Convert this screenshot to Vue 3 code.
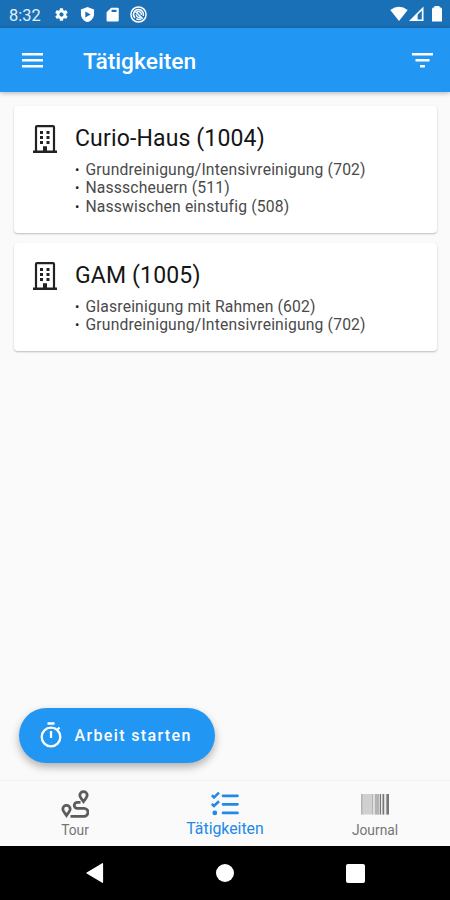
<script setup>
import { ref } from 'vue'

const objects = [
  {
    id: 1004,
    name: 'Curio-Haus',
    tasks: ['Grundreinigung/Intensivreinigung (702)', 'Nassscheuern (511)', 'Nasswischen einstufig (508)']
  },
  {
    id: 1005,
    name: 'GAM',
    tasks: ['Glasreinigung mit Rahmen (602)', 'Grundreinigung/Intensivreinigung (702)']
  }
]

const tab = ref('tasks')
</script>

<template>
  <div class="screen">
    <div class="status">
      <span class="time">8:32</span>
      <svg class="s-icon" viewBox="0 0 24 24">
        <path fill-rule="evenodd" d="M19.4 13a7.500 7.500 0 0 0 0-2l2.100-1.600a.5.5 0 0 0 .1-.7l-2-3.400a.5.500 0 0 0-.6-.2l-2.500 1a7 7 0 0 0-1.700-1l-.4-2.600a.5.5 0 0 0-.5-.5h-4a.5.5 0 0 0-.5.5L9 5.100a7 7 0 0 0-1.700 1l-2.500-1a.5.500 0 0 0-.6.200l-2 3.400a.5.5 0 0 0 .1.700L4.500 11a7.500 7.500 0 0 0 0 2l-2.200 1.600a.5.5 0 0 0-.1.700l2 3.400c.1.200.4.300.6.200l2.500-1a7 7 0 0 0 1.700 1l.4 2.600c0 .3.200.5.500.5h4c.3 0 .5-.2.500-.5l.4-2.600a7 7 0 0 0 1.700-1l2.500 1c.2.100.5 0 .6-.2l2-3.400a.5.5 0 0 0-.1-.7zM12 15.400a3.400 3.400 0 1 1 0-6.800 3.400 3.400 0 0 1 0 6.800z" />
      </svg>
      <svg class="s-icon" viewBox="0 0 24 24">
        <path fill-rule="evenodd" d="M12 0 1.500 4V11c0 6 4.500 11.500 10.500 13 6-1.500 10.500-7 10.500-13V4zM8.500 7.200 17 12l-8.500 4.800z" />
      </svg>
      <svg class="s-icon" viewBox="0 0 24 24">
        <path fill-rule="evenodd" d="M20 1H10L2.500 8.500v12.500a2 2 0 0 0 2 2H20a2 2 0 0 0 2-2V3a2 2 0 0 0-2-2zM10.500 4.500h8V8h-8z" />
      </svg>
      <svg class="s-icon wide" viewBox="0 0 24 24">
        <g fill="none" stroke="#fff" stroke-width="2.100">
          <circle cx="12" cy="12" r="10.700" />
          <path d="M7 17A7 7 0 0 1 12 5a7 7 0 0 1 6.700 9M8 8l10 10M9 12a3.500 3.500 0 0 0 6 3M10 8.500a4 4 0 0 1 6 4M9 18a7 7 0 0 0 7 0" />
        </g>
      </svg>
      <div class="signals">
        <svg width="18" height="16" viewBox="0 0 18 16"><path d="M.3 4Q9-2.500 17.700 4L9 15z" /></svg>
        <svg width="15" height="16" viewBox="0 0 15 16">
          <path fill-rule="evenodd" d="M14.500.5v14.500H0zM12.800 4.500 8.600 8.700v4.700h4.200z" />
        </svg>
        <svg class="battery" width="10" height="16" viewBox="0 0 10 16">
          <path d="M2.500 0h5v1.200Q10 1.500 10 3v12q0 .6-.6.6H.6Q0 15.600 0 15V3q0-1.500 2.500-1.800z" />
        </svg>
      </div>
    </div>

    <header class="appbar">
      <svg width="21" height="15" viewBox="0 0 21 15"><path d="M0 0h21v2.500H0zm0 6h21v2.500H0zm0 6h21v2.500H0z" /></svg>
      <h1>Tätigkeiten</h1>
      <svg class="filter" width="21" height="15" viewBox="0 0 21 15"><path d="M0 0h21v2.500H0zm3.500 6h14v2.500h-14zM8.100 12h4.800v2.500H8.100z" /></svg>
    </header>

    <main>
      <article v-for="o in objects" :key="o.id" class="card">
        <svg class="building" width="24" height="28" viewBox="0 0 24 28">
          <path d="M3 26V2.200Q3 1.200 4 1.200h16q1 0 1 1V26" fill="none" stroke="#222" stroke-width="2.200" />
          <path fill="#222" d="M0 25.600h10v-4.400h4v4.400h10V28H0zM7 6h3v3H7zm6.500 0h3v3h-3zM7 11h3v3H7zm6.500 0h3v3h-3zM7 16h3v3H7zm6.500 0h3v3h-3z" />
        </svg>
        <div>
          <h2>{{ o.name }} ({{ o.id }})</h2>
          <ul>
            <li v-for="t in o.tasks" :key="t">{{ t }}</li>
          </ul>
        </div>
      </article>
    </main>

    <button class="fab">
      <svg width="22" height="26" viewBox="0 0 22 26">
        <g fill="none" stroke="#fff" stroke-width="2.300">
          <circle cx="11" cy="15" r="9.300" />
          <path d="M7.500 1.500h7M11 9v7M17.500 7.500l2-2" />
        </g>
      </svg>
      <span>Arbeit starten</span>
    </button>

    <nav class="tabs">
      <div class="tab" :class="{ active: tab === 'tour' }" @click="tab = 'tour'">
        <svg width="28" height="28" viewBox="0 0 28 28">
          <g fill="none" stroke="#5c5c5c" stroke-width="2.800">
            <path d="M22.500 11.500C20.500 8.500 18.800 7.500 18.800 5.300a3.700 3.700 0 0 1 7.400 0c0 2.200-1.700 3.200-3.700 6.200zM5.500 25.500C3.500 22.500 1.800 21.300 1.800 19a3.700 3.700 0 0 1 7.400 0c0 2.300-1.700 3.500-3.700 6.500z" />
            <path d="M19.500 12.300h-3.200a3 3 0 0 0 0 6.100h6.700a3.900 3.900 0 0 1 0 7.900H9.500" />
          </g>
        </svg>
        <span>Tour</span>
      </div>
      <div class="tab" :class="{ active: tab === 'tasks' }" @click="tab = 'tasks'">
        <svg width="28" height="28" viewBox="0 0 28 28">
          <path fill="none" stroke="#2189e8" stroke-width="2.700" stroke-linecap="round" d="M12 5.800h14.500M12 14.300h14.500M12 22.900h14.500" />
          <path fill="none" stroke="#2189e8" stroke-width="2.600" d="M.8 5.300 3 7.400 8 2.600M.8 13.900 3 16l5-4.800" />
          <circle cx="3.800" cy="22.900" r="2.400" fill="#2189e8" />
        </svg>
        <span>Tätigkeiten</span>
      </div>
      <div class="tab" :class="{ active: tab === 'journal' }" @click="tab = 'journal'">
        <svg width="28" height="28" viewBox="0 0 28 28">
          <path fill="#d0d0d0" d="M0 4h28v20.500H0z" />
          <path fill="#b4b4b4" d="M0 4h1.500v20.500H0zM11 4h1v20.500h-1zM14 4h4v20.500h-4z" />
          <path fill="#777" d="M19 4h1v20.500h-1zM21.500 4h1.500v20.500h-1.500zM25.500 4H28v20.500h-2.500z" />
          <path fill="#f2f2f2" d="M20.200 4h1v20.500h-1zM23.800 4h1v20.500h-1zM12.500 4h.8v20.500h-.8z" />
        </svg>
        <span>Journal</span>
      </div>
    </nav>

    <div class="system">
      <div><svg width="18" height="20" viewBox="0 0 18 20"><path d="M16.500.7v18.600L1 10z" stroke="#fff" stroke-width="1.200" stroke-linejoin="round" /></svg></div>
      <div><span class="home"></span></div>
      <div><span class="recent"></span></div>
    </div>
  </div>
</template>

<style>
body {
  margin: 0;
}
</style>

<style scoped>
.screen {
  position: relative;
  display: flex;
  flex-direction: column;
  width: 450px;
  height: 900px;
  overflow: hidden;
  background: #fafafa;
  font-family: Roboto, sans-serif;
}

svg {
  display: block;
  flex: none;
  fill: #fff;
}

.status {
  height: 28px;
  display: flex;
  align-items: center;
  padding: 0 8px 0 9px;
  background: #1a70b7;
  color: #e4eff8;
}

.time {
  width: 45px;
  font-size: 16.400px;
  padding-top: 2px;
}

.s-icon {
  width: 15px;
  height: 15px;
  margin-right: 10.500px;
}

.s-icon.wide {
  width: 17px;
  height: 17px;
  margin-left: -1px;
}

.signals {
  display: flex;
  margin-left: auto;
  gap: 1px;
}

.battery {
  margin-left: 7px;
}

.appbar {
  position: relative;
  height: 64px;
  box-sizing: border-box;
  display: flex;
  align-items: center;
  padding: 1px 17px 0 22px;
  background: #2196f3;
  color: #fff;
  box-shadow: 0 1px 5px rgba(0, 0, 0, 0.3);
}

h1 {
  margin: 2px 0 0 40px;
  font-size: 22.800px;
  font-weight: 500;
}

.filter {
  margin-left: auto;
}

main {
  flex: 1;
  padding: 14px 13px 0 14px;
}

.card {
  display: flex;
  gap: 18px;
  padding: 19px 19px 17px;
  margin-bottom: 10px;
  border-radius: 4px;
  background: #fff;
  box-shadow: 0 1px 2px rgba(0, 0, 0, 0.25);
}

.building {
  margin-top: 0;
}

h2 {
  margin: 0;
  font-size: 23px;
  line-height: 28px;
  font-weight: 400;
  letter-spacing: 0.150px;
  color: #151515;
}

ul {
  margin: 8px 0 0;
  padding: 0;
  list-style: none;
}

li {
  font-size: 15.700px;
  line-height: 18.300px;
  letter-spacing: 0.170px;
  color: #4a4a4a;
}

li::before {
  content: '•';
  display: inline-block;
  width: 10.500px;
  font-size: 13px;
  color: #222;
  vertical-align: 1px;
  line-height: 1;
}

.fab {
  position: absolute;
  left: 19px;
  top: 708px;
  width: 196px;
  height: 55px;
  display: flex;
  align-items: center;
  gap: 12.500px;
  padding: 0 0 0 21px;
  border: 0;
  border-radius: 28px;
  background: #2196f3;
  color: #fff;
  font: 500 16px Roboto, sans-serif;
  letter-spacing: 1.350px;
  white-space: nowrap;
  box-shadow: 0 4px 8px rgba(0, 0, 0, 0.3);
}

.fab svg {
  margin-bottom: 2px;
}

.tabs {
  height: 65px;
  display: flex;
  box-shadow: 0 -1px 1px rgba(0, 0, 0, 0.04);
}

.tab {
  flex: 1;
  display: flex;
  flex-direction: column;
  align-items: center;
  padding-top: 9px;
  font-size: 13.800px;
  line-height: 20px;
  color: #757575;
}

.tab span {
  margin-top: 2px;
}

.tab.active {
  font-size: 15.800px;
  color: #2189e8;
}

.tab.active span {
  margin-top: 1px;
}

.system {
  height: 54px;
  display: flex;
  align-items: center;
  justify-content: center;
  background: #000;
}

.system div {
  width: 130px;
  display: flex;
  justify-content: center;
}

.home {
  width: 18px;
  height: 18px;
  border-radius: 50%;
  background: #fff;
}

.recent {
  width: 19px;
  height: 19px;
  border-radius: 2px;
  background: #fff;
}
</style>
